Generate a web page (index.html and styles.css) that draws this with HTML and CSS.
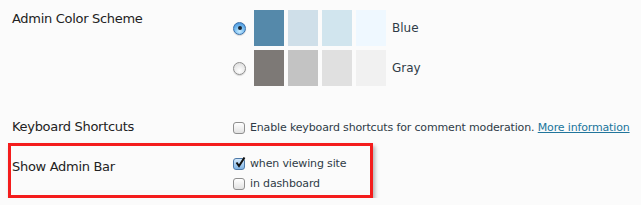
FILE: index.html
```html
<!DOCTYPE html>
<html lang="en">
<head>
    <meta charset="UTF-8">
    <title>Personal Options</title>
    <link rel="stylesheet" href="styles.css">
</head>
<body>
    <div class="options">
        <div class="row row-scheme">
            <div class="label">Admin Color Scheme</div>
            <div class="field">
                <div class="scheme">
                    <span class="radio checked"></span>
                    <span class="swatch" style="background:#5589aa"></span>
                    <span class="swatch" style="background:#cfdfe9"></span>
                    <span class="swatch" style="background:#d1e5ee"></span>
                    <span class="swatch" style="background:#eff8ff"></span>
                    <span class="scheme-name">Blue</span>
                </div>
                <div class="scheme">
                    <span class="radio"></span>
                    <span class="swatch" style="background:#7d7976"></span>
                    <span class="swatch" style="background:#c3c3c3"></span>
                    <span class="swatch" style="background:#e0e0e0"></span>
                    <span class="swatch" style="background:#f1f1f1"></span>
                    <span class="scheme-name">Gray</span>
                </div>
            </div>
        </div>

        <div class="row row-keys">
            <div class="label">Keyboard Shortcuts</div>
            <div class="field">
                <label class="check">
                    <span class="box"></span>
                    <span>Enable keyboard shortcuts for comment moderation. <a href="#">More information</a></span>
                </label>
            </div>
        </div>

        <div class="row row-bar highlight">
            <div class="label">Show Admin Bar</div>
            <div class="field">
                <label class="check">
                    <span class="box checked">
                        <svg width="12" height="12" viewBox="0 0 12 12"><path d="M2.5 5.5 L5 9 L10.5 0.5" fill="none" stroke="#111" stroke-width="2"/></svg>
                    </span>
                    <span>when viewing site</span>
                </label>
                <label class="check">
                    <span class="box"></span>
                    <span>in dashboard</span>
                </label>
            </div>
        </div>
    </div>
</body>
</html>
```

FILE: styles.css
```css
* {
    margin: 0;
    padding: 0;
    box-sizing: border-box;
}

body {
    background: #fbfbfb;
    font-family: 'DejaVu Sans', sans-serif;
    color: #333;
}

.options {
    padding-top: 10px;
}

.row {
    display: grid;
    grid-template-columns: 221px 1fr;
    padding-left: 12px;
}

.label {
    font-size: 13px;
    line-height: 16px;
    letter-spacing: -0.3px;
    color: #222;
    padding-top: 1px;
}

.field {
    font-size: 11px;
    line-height: 16px;
    letter-spacing: -0.15px;
    color: #2f3b47;
}

/* colour scheme picker */
.scheme {
    display: flex;
    align-items: center;
    height: 36px;
    margin-bottom: 4px;
}

.scheme .radio {
    margin-right: 8px;
}

.swatch {
    width: 30px;
    height: 36px;
    margin-right: 4px;
}

.scheme-name {
    margin-left: 2px;
    font-size: 12px;
    letter-spacing: 0;
}

.radio {
    width: 13px;
    height: 13px;
    border-radius: 50%;
    border: 1px solid #8e8e8e;
    background: radial-gradient(circle at 50% 70%, #ffffff, #d8d8d8);
    box-shadow: 0 1px 1px rgba(0, 0, 0, 0.15);
    position: relative;
}

.radio.checked {
    border-color: #3a6fa8;
    background: radial-gradient(circle at 50% 75%, #c9ecff 0, #6cb5ee 55%, #3c87d4 100%);
}

.radio.checked::after {
    content: '';
    position: absolute;
    left: 3.5px;
    top: 3.5px;
    width: 4px;
    height: 4px;
    border-radius: 50%;
    background: #1b2633;
}

/* checkbox rows */
.row-keys {
    margin-top: 28px;
}

.check {
    display: flex;
    align-items: center;
    gap: 5px;
    height: 20px;
    white-space: nowrap;
}

.box {
    width: 12px;
    height: 12px;
    border: 1px solid #8f8f8f;
    border-radius: 3px;
    background: linear-gradient(#ffffff, #e2e2e2);
    position: relative;
    flex-shrink: 0;
}

.box.checked {
    border-color: #4d79a8;
    background: linear-gradient(#d4e9fb, #7fb4e6);
}

.box svg {
    position: absolute;
    left: 0;
    top: -2px;
}

.check a {
    color: #21759b;
}

.highlight {
    margin-top: 5px;
    margin-left: 8px;
    width: 365px;
    padding: 8px 0 1px 1px;
    border: 3px solid #f41c1c;
    box-shadow: 2px 3px 4px rgba(0, 0, 0, 0.3);
}

.highlight .label {
    padding-top: 5px;
}
```
